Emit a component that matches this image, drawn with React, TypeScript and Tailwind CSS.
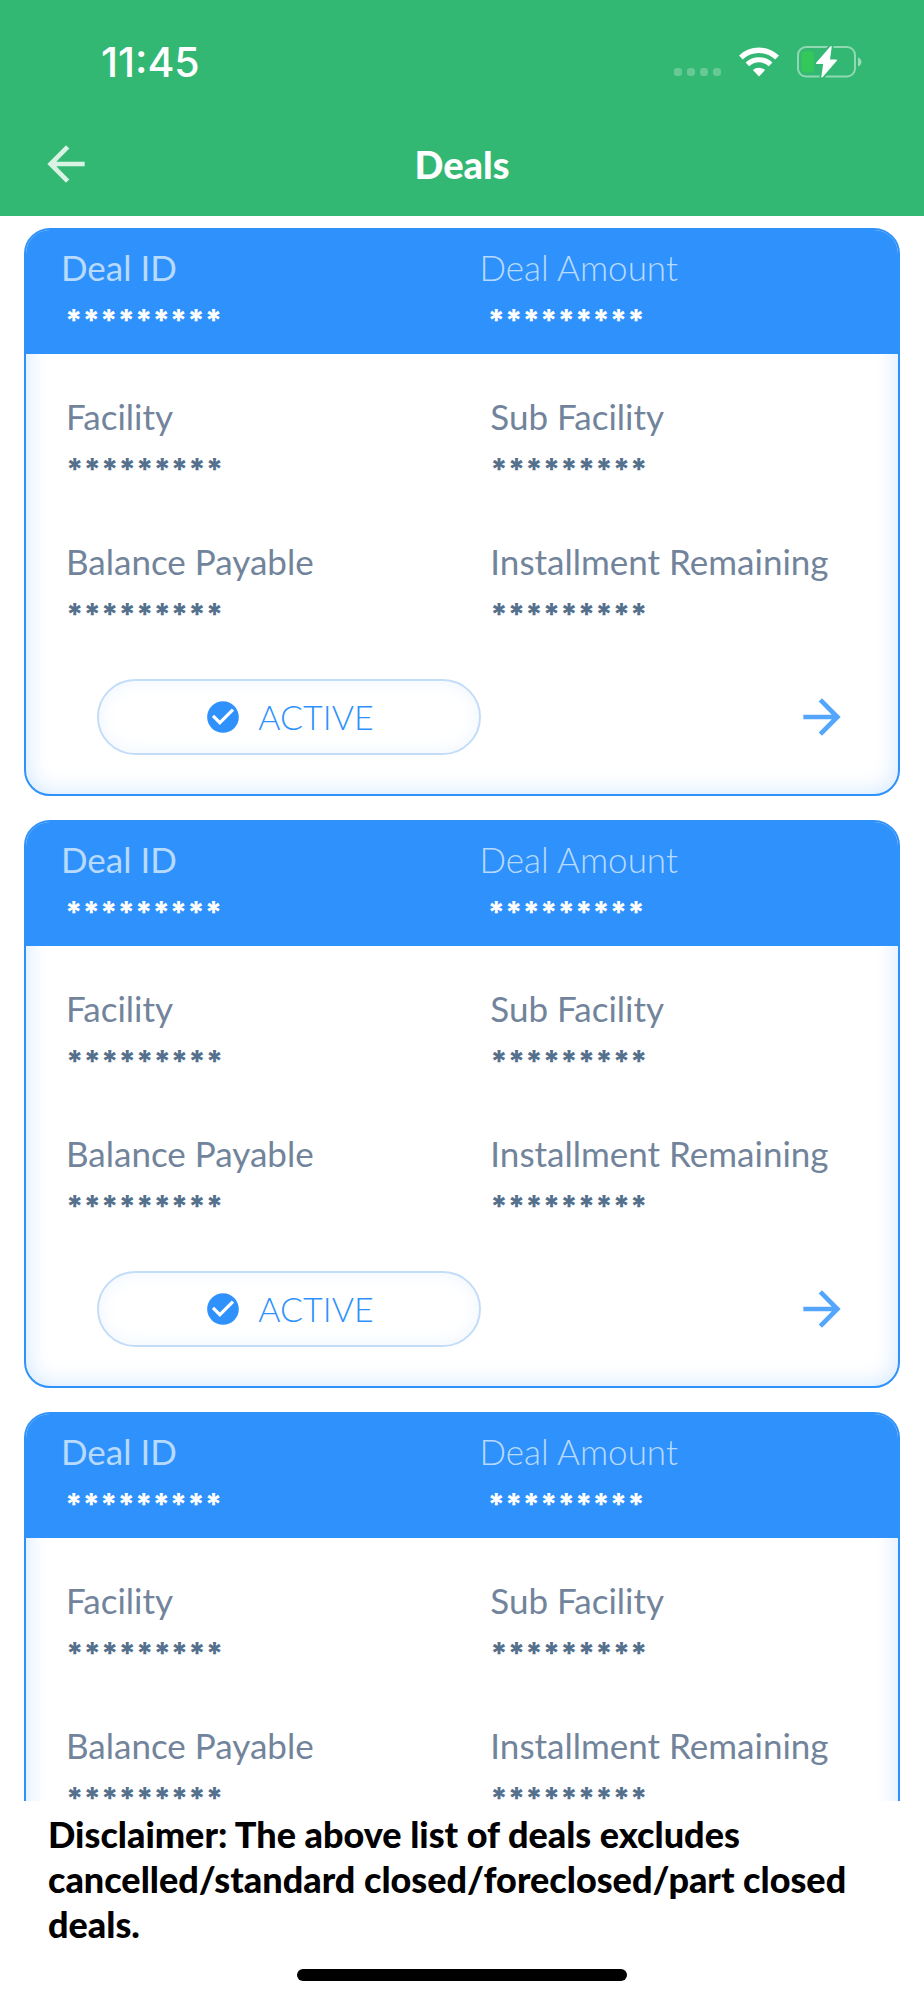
import { MdArrowBack, MdArrowForward, MdCheckCircle } from 'react-icons/md';

const MASK = '*********';

const deals: { id: number; status?: string }[] = [
  { id: 1, status: 'ACTIVE' },
  { id: 2, status: 'ACTIVE' },
  { id: 3 },
];

function SignalDots() {
  return (
    <div className="flex gap-[5px] pt-5">
      {[0, 1, 2, 3].map(i => (
        <span key={i} className="w-2 h-2 rounded-[3px] bg-white/25" />
      ))}
    </div>
  );
}

function WifiIcon() {
  return (
    <svg className="w-10 h-[30px]" viewBox="0 0 40 30" fill="none" aria-hidden="true">
      <path d="M1.9 10.5A26.3 26.3 0 0 1 38.1 10.5" stroke="#fff" strokeWidth="5.4" />
      <path d="M8.4 17.4A16.8 16.8 0 0 1 31.6 17.4" stroke="#fff" strokeWidth="5.2" />
      <path d="M20 29.5L13.9 23.1A9 9 0 0 1 26.1 23.1Z" fill="#fff" />
    </svg>
  );
}

function BatteryIcon() {
  return (
    <svg className="w-[65px] h-8" viewBox="0 0 65 32" fill="none" aria-hidden="true">
      <rect x="1" y="1" width="57" height="29.5" rx="8" stroke="#fff" strokeOpacity="0.45" strokeWidth="2" />
      <path d="M61 11.5C65.5 12.5 65.5 19.5 61 20.5Z" fill="#fff" fillOpacity="0.5" />
      <rect x="4.5" y="5" width="12.5" height="21.5" rx="4" fill="#34c759" />
      <path
        d="M34 0.5L19.5 17.5H26.5L25 31L39.5 14H32.5Z"
        fill="#fff"
        stroke="#33b873"
        strokeWidth="5"
        strokeLinejoin="round"
      />
      <path
        d="M34 0.8L19.7 17.2H27L25 30.8L39.3 14.2H32.2Z"
        fill="#fff"
        stroke="#fff"
        strokeWidth="1.4"
        strokeLinejoin="round"
      />
    </svg>
  );
}

function Stars() {
  return <p className="font-['Inter',sans-serif] font-extrabold text-[30px] leading-[34px]">{MASK}</p>;
}

function Field({ label }: { label: string }) {
  return (
    <div className="whitespace-nowrap">
      <p className="text-[35px] leading-10 text-[#72849b]">{label}</p>
      <div className="text-[#54708c] pt-4">
        <Stars />
      </div>
    </div>
  );
}

function DealCard({ status }: { status?: string }) {
  return (
    <article className="shrink-0 rounded-[26px] border-2 border-[#2f92fc] overflow-hidden shadow-[inset_0_0_24px_#cfe6ff]">
      {/* Blue summary strip */}
      <div className="flex h-[124px] bg-[#2f92fc] pl-[35px] pt-[17px] whitespace-nowrap">
        <div className="w-1/2">
          <p className="text-[35px] leading-10 text-[#b8dafe]">Deal ID</p>
          <div className="text-white pl-1 pt-4">
            <Stars />
          </div>
        </div>
        <div className="w-1/2">
          <p className="text-[35px] leading-10 font-light text-[#b8dafe]">Deal Amount</p>
          <div className="text-white pl-2 pt-4">
            <Stars />
          </div>
        </div>
      </div>

      {/* Details */}
      <div className="grid grid-cols-[51%_1fr] gap-y-[55px] pl-10 pt-[42px]">
        <Field label="Facility" />
        <Field label="Sub Facility" />
        <Field label="Balance Payable" />
        <Field label="Installment Remaining" />
      </div>

      <div className="flex items-center justify-between pl-[71px] pr-12 pt-12 pb-[39px]">
        <div className="flex items-center justify-center gap-4 w-[384px] h-[76px] rounded-[38px] border-2 border-[#c3dcf8] bg-white shadow-[inset_0_0_20px_#eef5fd]">
          {status && (
            <>
              <MdCheckCircle className="w-[38px] h-[38px] text-[#2f92fc]" />
              <span className="text-[34px] leading-10 font-light text-[#2f92fc]">{status}</span>
            </>
          )}
        </div>
        <button type="button" aria-label="Open deal" className="text-[#54a6fd]">
          <MdArrowForward className="w-14 h-14" />
        </button>
      </div>
    </article>
  );
}

export default function App() {
  return (
    <div className="h-screen flex flex-col bg-white font-['Lato',sans-serif]">
      <header className="h-[216px] shrink-0 bg-[#33b873] text-white">
        <div className="flex items-center justify-between h-[124px] pl-[101px] pr-[62px]">
          <span className="font-['Inter',sans-serif] font-medium text-[41px] leading-[48px]">11:45</span>
          <div className="flex items-center">
            <SignalDots />
            <div className="px-[18px]">
              <WifiIcon />
            </div>
            <BatteryIcon />
          </div>
        </div>
        <div className="grid grid-cols-[1fr_auto_1fr] items-center h-[80px] px-[38px]">
          <button type="button" aria-label="Back" className="justify-self-start text-[#d8f2e4]">
            <MdArrowBack className="w-14 h-14" />
          </button>
          <h1 className="font-black text-[38px] leading-10">Deals</h1>
        </div>
      </header>

      <main className="flex-1 min-h-0 overflow-y-auto [scrollbar-width:none] flex flex-col gap-6 px-6 pt-3">
        {deals.map(deal => (
          <DealCard key={deal.id} status={deal.status} />
        ))}
      </main>

      <footer className="shrink-0 bg-white pt-[11px] pb-[19px]">
        <p className="px-12 font-black text-[36px] leading-[45px] text-black">
          Disclaimer: The above list of deals excludes cancelled/standard closed/foreclosed/part closed deals.
        </p>
        <div className="mx-auto mt-[22px] h-3 w-[330px] rounded-full bg-black" />
      </footer>
    </div>
  );
}
